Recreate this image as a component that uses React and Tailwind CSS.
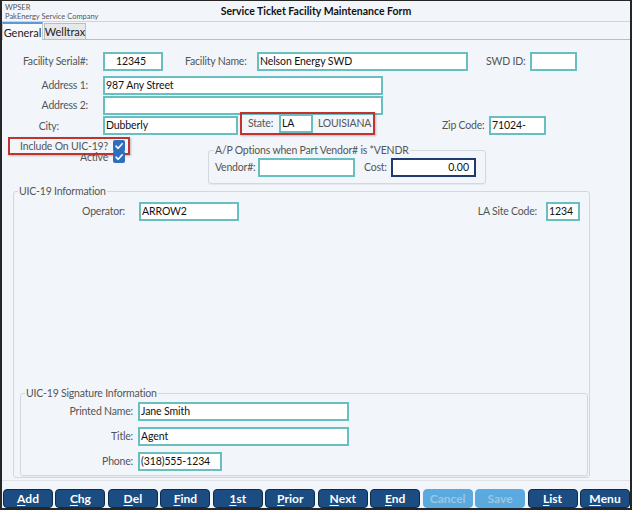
import React from "react";

const F = { fontFamily: 'Lato, "Open Sans", sans-serif' };

function Input({ w, value = "", className = "", align = "left" }) {
  return (
    <div
      className={`h-[19px] bg-white border-2 border-[#68bfbf] flex items-center px-[1px] text-[10.5px] tracking-[-0.1px] text-[#111] leading-none whitespace-nowrap ${align === "right" ? "justify-end pr-[5px]" : ""} ${className}`}
      style={{ width: w }}
    >
      {value}
    </div>
  );
}

function Label({ children, className = "" }) {
  return <div className={`text-[10.5px] tracking-[-0.2px] text-[#555] leading-none whitespace-nowrap ${className}`}>{children}</div>;
}

function Check() {
  return (
    <div className="w-[12px] h-[12px] shrink-0 rounded-[2px] bg-[#2f6dbd] flex items-center justify-center">
      <svg width="10" height="10" viewBox="0 0 10 10">
        <path d="M2 5.2 L4.2 7.3 L8.2 2.8" fill="none" stroke="white" strokeWidth="1.6" strokeLinecap="round" strokeLinejoin="round" />
      </svg>
    </div>
  );
}

function Btn({ u, rest, disabled }) {
  return (
    <div
      className={`h-[19px] rounded-[4px] flex items-center justify-center text-[12px] font-bold leading-none border ${
        disabled ? "bg-[#5aaae0] border-[#5aaae0] text-[#9cc6e3]" : "bg-[#1b4d82] border-[#0d2c4e] text-white"
      }`}
    >
      <span className={disabled ? "" : "underline underline-offset-[2px] decoration-1"}>{u}</span>
      <span>{rest}</span>
    </div>
  );
}

export default function App() {
  const buttons = [
    ["A", "dd"],
    ["C", "hg"],
    ["D", "el"],
    ["F", "ind"],
    ["1", "st"],
    ["P", "rior"],
    ["N", "ext"],
    ["E", "nd"],
    ["Cancel", "", true],
    ["Save", "", true],
    ["L", "ist"],
    ["M", "enu"],
  ];
  return (
    <div className="w-[632px] h-[510px] bg-[#262626] border-t border-x-2 border-b-2 border-[#262626] flex flex-col" style={F}>
      <div className="flex-1 bg-[#f2f6fb] flex flex-col">
        {/* header */}
        <div className="h-[21px] grid grid-cols-[1fr_auto_1fr] items-center border-b border-[#cfd4da]">
          <div className="pl-[3px] text-[7.5px] leading-[9px] text-[#555] pt-[1px] whitespace-nowrap">
            <div>WPSER</div>
            <div>PakEnergy Service Company</div>
          </div>
          <div className="text-[10.5px] font-bold text-[#111] leading-none">Service Ticket Facility Maintenance Form</div>
          <div />
        </div>
        {/* tabs */}
        <div className="h-[18px] flex items-end border-b border-[#b9bec4] bg-[#f2f6fb]">
          <div className="h-[18px] w-[41px] border-t-2 border-t-[#5b9ad6] border-x border-[#c4c8cd] bg-[#f7f9fb] flex items-center justify-center text-[11px] text-[#222] leading-none -mb-px">
            General
          </div>
          <div className="h-[16px] w-[42px] border border-[#b9bec4] border-b-0 bg-[#e6e8ea] flex items-center justify-center text-[11px] text-[#222] leading-none ml-[1px]">
            Welltrax
          </div>
        </div>

        {/* form */}
        <div className="flex-1 flex flex-col pt-[12px]">
          {/* row 1 */}
          <div className="flex items-center h-[19px]">
            <Label className="w-[86px] text-right">Facility Serial#:</Label>
            <Input w={60} value="12345" className="ml-[15px] pl-[11px]" />
            <Label className="ml-[22px] w-[72px]">Facility Name:</Label>
            <Input w={211} value="Nelson Energy SWD" />
            <Label className="ml-[18px] w-[44px]">SWD ID:</Label>
            <Input w={47} />
          </div>
          {/* address 1 */}
          <div className="flex items-center h-[19px] mt-[5px]">
            <Label className="w-[86px] text-right">Address 1:</Label>
            <Input w={280} value="987 Any Street" className="ml-[15px]" />
          </div>
          <div className="flex items-center h-[19px] mt-[1px]">
            <Label className="w-[86px] text-right">Address 2:</Label>
            <Input w={280} className="ml-[15px]" />
          </div>
          {/* city */}
          <div className="flex items-start h-[19px] mt-[1px]">
            <Label className="w-[86px] text-right mt-[5px] pr-[29px]">City:</Label>
            <Input w={135} value="Dubberly" className="ml-[15px]" />
            <div className="ml-[2px] -mt-[4px] h-[23px] w-[135px] border-2 border-[#c3322d] shadow-[1px_1px_2px_rgba(0,0,0,0.25)] flex items-center pl-[6px]">
              <Label className="w-[31px]">State:</Label>
              <Input w={34} value="LA" />
              <Label className="ml-[5px]">LOUISIANA</Label>
            </div>
            <div className="flex items-center h-[19px] ml-[67px]">
              <Label className="w-[47px]">Zip Code:</Label>
              <Input w={57} value="71024-" />
            </div>
          </div>

          {/* include / AP options */}
          <div className="flex items-start">
            <div className="flex flex-col ml-[6px] w-[122px] mt-[2px]">
              <div className="h-[18px] border-2 border-[#c3322d] shadow-[1px_1px_2px_rgba(0,0,0,0.25)] flex items-center justify-end pr-[3px] gap-[5px]">
                <Label>Include On UIC-19?</Label>
                <Check />
              </div>
              <div className="h-[12px] -mt-[4px] flex items-center justify-end pr-[5px] gap-[5px]">
                <Label>Active</Label>
                <Check />
              </div>
            </div>
            <fieldset className="ml-[78px] mt-[9px] w-[278px] border border-[#d3d8de] rounded-[3px] px-[6px] pb-[6px] shadow-[0_1px_1px_rgba(0,0,0,0.06)]">
              <legend className="text-[10.5px] tracking-[-0.2px] leading-[13px] text-[#555] px-[1px] -ml-[1px]">A/P Options when Part Vendor# is *VENDR</legend>
              <div className="flex items-center h-[19px] mt-[1px]">
                <Label className="w-[43px]">Vendor#:</Label>
                <Input w={97} />
                <Label className="ml-[9px] w-[27px]">Cost:</Label>
                <div className="w-[85px] h-[19px] bg-white border-2 border-[#1f3a6e] flex items-center justify-end pr-[5px] text-[10.5px] text-[#111] leading-none">0.00</div>
              </div>
            </fieldset>
          </div>

          {/* UIC-19 information */}
          <fieldset className="ml-[11px] mt-[1px] w-[577px] flex-1 border border-[#d3d8de] rounded-[3px] flex flex-col pb-[1px] pr-[1px] min-h-0">
            <legend className="text-[10.5px] tracking-[-0.2px] leading-[13px] text-[#555] ml-[4px] px-[1px]">UIC-19 Information</legend>
            <div className="flex items-center h-[19px] mt-[4px]">
              <Label className="w-[111px] text-right">Operator:</Label>
              <Input w={100} value="ARROW2" className="ml-[14px]" />
              <div className="flex-1" />
              <Label>LA Site Code:</Label>
              <Input w={34} value="1234" className="ml-[9px] mr-[8px]" />
            </div>
            <div className="flex-1" />
            <fieldset className="ml-[6px] border border-[#d3d8de] rounded-[3px] pb-[4px] shadow-[0_1px_1px_rgba(0,0,0,0.06)]">
              <legend className="text-[10.5px] tracking-[-0.2px] leading-[13px] text-[#555] ml-[4px] px-[1px]">UIC-19 Signature Information</legend>
              <div className="flex items-center h-[19px] mt-[2px]">
                <Label className="w-[112px] text-right">Printed Name:</Label>
                <Input w={211} value="Jane Smith" className="ml-[5px]" />
              </div>
              <div className="flex items-center h-[19px] mt-[6px]">
                <Label className="w-[112px] text-right">Title:</Label>
                <Input w={211} value="Agent" className="ml-[5px]" />
              </div>
              <div className="flex items-center h-[19px] mt-[6px]">
                <Label className="w-[112px] text-right">Phone:</Label>
                <Input w={84} value="(318)555-1234" className="ml-[5px]" />
              </div>
            </fieldset>
          </fieldset>
          <div className="h-[9px] border-t border-[#dfe3e8] mt-[2px]" />
        </div>

        {/* buttons */}
        <div className="grid grid-cols-12 gap-[2.5px] pl-[1px] pr-[0px]">
          {buttons.map(([u, r, d], i) => (
            <Btn key={i} u={u} rest={r} disabled={d} />
          ))}
        </div>
      </div>
    </div>
  );
}
